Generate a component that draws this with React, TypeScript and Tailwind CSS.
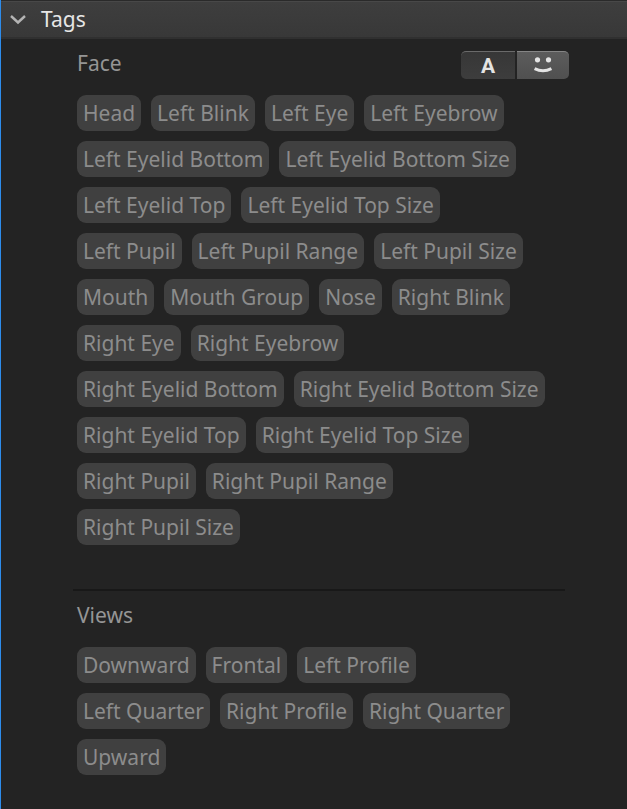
import { useState } from "react";

const faceTags = [
  "Head",
  "Left Blink",
  "Left Eye",
  "Left Eyebrow",
  "Left Eyelid Bottom",
  "Left Eyelid Bottom Size",
  "Left Eyelid Top",
  "Left Eyelid Top Size",
  "Left Pupil",
  "Left Pupil Range",
  "Left Pupil Size",
  "Mouth",
  "Mouth Group",
  "Nose",
  "Right Blink",
  "Right Eye",
  "Right Eyebrow",
  "Right Eyelid Bottom",
  "Right Eyelid Bottom Size",
  "Right Eyelid Top",
  "Right Eyelid Top Size",
  "Right Pupil",
  "Right Pupil Range",
  "Right Pupil Size",
];

const viewTags = [
  "Downward",
  "Frontal",
  "Left Profile",
  "Left Quarter",
  "Right Profile",
  "Right Quarter",
  "Upward",
];

interface TagListProps {
  tags: string[];
  selected: string[];
  onToggle: (tag: string) => void;
}

function TagList({ tags, selected, onToggle }: TagListProps) {
  return (
    <div className="flex flex-wrap gap-[10px] pr-5">
      {tags.map((tag) => (
        <button
          key={tag}
          type="button"
          aria-pressed={selected.includes(tag)}
          onClick={() => onToggle(tag)}
          className="h-9 rounded-[9px] bg-[#404040] px-[6px] whitespace-nowrap text-[#8c8c8c] aria-pressed:bg-[#5a5a5a] aria-pressed:text-white"
        >
          {tag}
        </button>
      ))}
    </div>
  );
}

export default function App() {
  const [open, setOpen] = useState(true);
  const [mode, setMode] = useState<"text" | "icon">("icon");
  const [selected, setSelected] = useState<string[]>([]);

  const handleToggle = (tag: string) => {
    setSelected((prev) =>
      prev.includes(tag) ? prev.filter((t) => t !== tag) : [...prev, tag]
    );
  };

  return (
    <main className="min-h-screen border-l border-[#2d8ceb] bg-[#232323] font-['Noto_Sans',sans-serif] text-[21px] leading-7 text-[#959595]">
      <h2 className="border-t border-b-2 border-t-[#2a2a2a] border-b-[#303030] bg-[#3a3a3a]">
        <button
          type="button"
          aria-expanded={open}
          onClick={() => setOpen(!open)}
          className="flex h-9 w-full items-center gap-[14px] border-t border-[#484848] bg-linear-to-b from-[#3e3e3e] to-[#383838] pb-[2px] pl-2 text-[#e6e6e6]"
        >
          <svg width="18" height="18" viewBox="0 0 18 18" fill="none" aria-hidden="true">
            <path
              d="M2 6L9 12.5L16 6"
              stroke="#b4b4b4"
              strokeWidth="2.4"
            />
          </svg>
          Tags
        </button>
      </h2>

      {open && (
        <div className="pr-[58px] pl-[76px]">
          <section>
            <div className="flex h-14 items-start justify-between pt-[10px]">
              <h3>Face</h3>
              <div className="flex gap-[2px] pt-[2px]">
                <button
                  type="button"
                  aria-label="Show tags as text"
                  aria-pressed={mode === "text"}
                  onClick={() => setMode("text")}
                  className="flex h-7 w-[54px] items-center justify-center rounded-l-[5px] border-t border-[#6a6a6a] bg-linear-to-b from-[#373737] to-[#3d3d3d] font-[Roboto,sans-serif] font-bold text-[#e4e4e4]"
                >
                  A
                </button>
                <button
                  type="button"
                  aria-label="Show tags as icons"
                  aria-pressed={mode === "icon"}
                  onClick={() => setMode("icon")}
                  className="flex h-7 w-[52px] items-center justify-center rounded-r-[5px] border-t border-[#858585] bg-linear-to-b from-[#5c5c5c] to-[#505050]"
                >
                  <svg width="20" height="18" viewBox="0 0 20 18" fill="none" aria-hidden="true">
                    <circle cx="4.5" cy="2.8" r="2.6" fill="#e4e4e4" />
                    <circle cx="15.5" cy="2.8" r="2.6" fill="#e4e4e4" />
                    <path
                      d="M1.6 11.6Q10 15.8 18.4 11.6"
                      stroke="#e4e4e4"
                      strokeWidth="3"
                    />
                  </svg>
                </button>
              </div>
            </div>
            <TagList tags={faceTags} selected={selected} onToggle={handleToggle} />
          </section>

          <hr className="-ml-1 mt-11 mr-1 border-t-2 border-[#181818]" />

          <section>
            <h3 className="pt-[10px] pb-[18px]">Views</h3>
            <TagList tags={viewTags} selected={selected} onToggle={handleToggle} />
          </section>
        </div>
      )}
    </main>
  );
}
